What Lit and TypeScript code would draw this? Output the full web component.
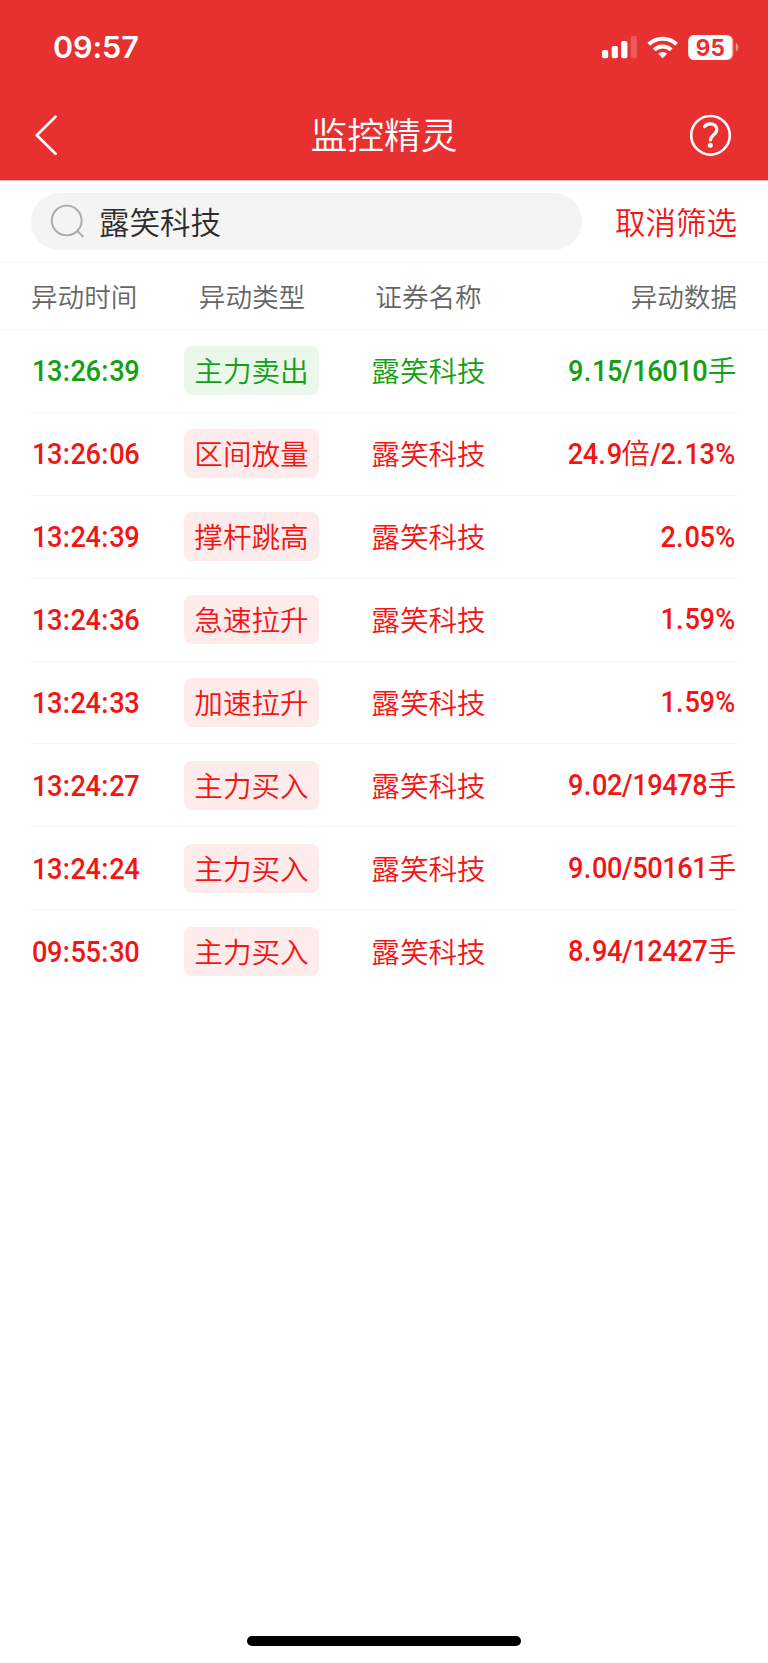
import { LitElement, html, css, svg } from "lit";
import { customElement, property } from "lit/decorators.js";
import { classMap } from "lit/directives/class-map.js";

interface Alert {
  time: string;
  type: string;
  name: string;
  data: string;
  sell?: boolean;
}

const ALERTS: Alert[] = [
  { time: "13:26:39", type: "主力卖出", name: "露笑科技", data: "9.15/16010手", sell: true },
  { time: "13:26:06", type: "区间放量", name: "露笑科技", data: "24.9倍/2.13%" },
  { time: "13:24:39", type: "撑杆跳高", name: "露笑科技", data: "2.05%" },
  { time: "13:24:36", type: "急速拉升", name: "露笑科技", data: "1.59%" },
  { time: "13:24:33", type: "加速拉升", name: "露笑科技", data: "1.59%" },
  { time: "13:24:27", type: "主力买入", name: "露笑科技", data: "9.02/19478手" },
  { time: "13:24:24", type: "主力买入", name: "露笑科技", data: "9.00/50161手" },
  { time: "09:55:30", type: "主力买入", name: "露笑科技", data: "8.94/12427手" },
];

@customElement("status-bar")
class StatusBar extends LitElement {
  static styles = css`
    :host {
      display: flex;
      height: 90px;
      box-sizing: border-box;
      padding: 30px 29px 0 53px;
      justify-content: space-between;
      align-items: flex-start;
      color: #fff;
    }
    .clock {
      font: 600 30.5px/33px Inter, sans-serif;
      letter-spacing: -0.1px;
    }
    .icons {
      display: block;
      margin-top: 3px;
    }
    .level {
      font: 700 22.5px Inter, sans-serif;
      fill: #e83030;
    }
  `;
  render() {
    return html`
      <span class="clock">09:57</span>
      <svg class="icons" width="138" height="30" viewBox="601 33 138 30">
        ${svg`
          <g fill="#fff">
            <rect x="602" y="50" width="6.2" height="8.2" rx="1.8" />
            <rect x="611.7" y="46" width="6.2" height="12.2" rx="1.8" />
            <rect x="621.2" y="41" width="6.2" height="17.2" rx="1.8" />
            <rect x="630.8" y="36" width="6.2" height="22.2" rx="1.8" opacity=".2" />
            <rect x="688.3" y="35" width="45" height="25" rx="6" opacity=".6" />
            <rect x="688.3" y="35" width="43.5" height="25" rx="6" />
            <path d="M735.8 42.8c3.2 1.4 3.2 7.4 0 8.8z" opacity=".5" />
            <path d="M662.7 58.2l-4.5-4.5a6.6 6.6 0 0 1 9 0z" />
          </g>
          <g fill="none" stroke="#fff" stroke-width="4">
            <path d="M648.8 44.3a20 20 0 0 1 27.8 0" />
            <path d="M654.2 49.9a12.4 12.4 0 0 1 17 0" />
          </g>
          <text class="level" x="710.3" y="55.5" text-anchor="middle">95</text>
        `}
      </svg>
    `;
  }
}

@customElement("nav-bar")
class NavBar extends LitElement {
  static styles = css`
    :host {
      display: grid;
      grid-template-columns: 1fr auto 1fr;
      align-items: center;
      height: 90px;
      box-sizing: border-box;
      padding: 0 36px 0 35px;
      color: #fff;
    }
    .title {
      font-size: 36.8px;
      line-height: 44px;
      font-weight: 350;
      padding: 0 0 4px 1px;
    }
    .icon {
      display: block;
      margin-bottom: 1px;
    }
    .help {
      justify-self: end;
    }
  `;
  render() {
    return html`
      <svg class="icon" width="24" height="42" viewBox="35 114 24 42" fill="none" stroke="#fff" stroke-width="2.7" stroke-linecap="round" stroke-linejoin="round">
        <path d="M55.6 116.6L36.8 135.2L55.6 153.8" />
      </svg>
      <span class="title">监控精灵</span>
      <svg class="icon help" width="42" height="42" viewBox="690 114 42 42" fill="none" stroke="#fff">
        <circle cx="710.5" cy="135.3" r="19.3" stroke-width="2.6" />
        <path d="M704.6 126.6c1.2-1.8 3.3-2.7 5.6-2.7 4 0 6.5 2.2 6.5 5.8 0 5-6.2 5.6-6.2 10.2" stroke-width="3.3" stroke-linecap="round" />
        <circle cx="710.3" cy="145.2" r="2.5" fill="#fff" stroke="none" />
      </svg>
    `;
  }
}

@customElement("alert-row")
class AlertRow extends LitElement {
  @property({ attribute: false }) alert!: Alert;

  static styles = css`
    .row {
      display: grid;
      grid-template-columns: 153px 135px 218px 199px;
      align-items: center;
      height: 81.6px;
      font-size: 28.6px;
      line-height: 40px;
      font-weight: 350;
      color: #f51414;
      white-space: nowrap;
    }
    .sell {
      color: #14a014;
    }
    .num {
      font-family: Roboto, "Noto Sans CJK SC", sans-serif;
      font-weight: 500;
      letter-spacing: -0.45px;
      transform: scaleX(0.95);
    }
    .time {
      padding: 1px 0 0 1px;
      transform-origin: left;
    }
    .colon {
      letter-spacing: 0.85px;
      padding-left: 0.7px;
    }
    .wide {
      letter-spacing: 0.9px;
      padding-left: 0.6px;
    }
    .han {
      display: inline-block;
      margin: 0 0.8px;
      font-weight: 350;
      letter-spacing: 0;
      transform: scaleX(1.053);
    }
    .tag {
      height: 49px;
      line-height: 47px;
      text-align: center;
      border-radius: 8px;
      background: #feecec;
    }
    .sell .tag {
      background: #ebf7eb;
    }
    .name {
      padding: 0 0 1px 1px;
      text-align: center;
    }
    .data {
      text-align: right;
      transform-origin: right;
    }
  `;
  render() {
    const a = this.alert;
    return html`
      <div class=${classMap({ row: true, sell: !!a.sell })}>
        <span class="num time">${a.time.split(":").map((p, i) => (i ? html`<span class="colon">:</span>${p}` : p))}</span>
        <span class="tag">${a.type}</span>
        <span class="name">${a.name}</span>
        <span class="num data">${a.data
          .split(/([手倍.%])/)
          .map((p) =>
            /[手倍]/.test(p) ? html`<span class="han">${p}</span>` : /^[.%]$/.test(p) ? html`<span class="wide">${p}</span>` : p
          )}</span>
      </div>
    `;
  }
}

@customElement("app-root")
class AppRoot extends LitElement {
  static styles = css`
    :host {
      display: flex;
      flex-direction: column;
      width: 768px;
      height: 1663px;
      overflow: hidden;
      background: #fff;
      font-family: "Noto Sans CJK SC", sans-serif;
    }
    .top {
      background: #e83030;
      border-bottom: 1px solid #fbb9b9;
    }
    .search {
      display: flex;
      align-items: center;
      justify-content: space-between;
      height: 82px;
      box-sizing: border-box;
      padding: 0 31px 0 31px;
      border-bottom: 1px solid #f3f3f3;
      font-size: 30.5px;
      line-height: 44px;
      font-weight: 350;
    }
    .field {
      display: flex;
      align-items: center;
      gap: 14px;
      width: 551px;
      height: 57px;
      box-sizing: border-box;
      padding-left: 19px;
      border-radius: 29px;
      background: #f4f4f4;
      color: #2c2c2c;
    }
    .field span,
    .cancel {
      padding-bottom: 2px;
    }
    .cancel {
      color: #f51414;
    }
    .head {
      display: grid;
      grid-template-columns: 153px 135px 218px 200px;
      align-items: center;
      height: 67px;
      box-sizing: border-box;
      padding: 0 31px 2px;
      border-bottom: 1px solid #f3f3f3;
      font-size: 26.6px;
      font-weight: 350;
      color: #666;
    }
    .mid {
      padding-left: 1px;
      text-align: center;
    }
    .end {
      text-align: right;
    }
    .list {
      display: flex;
      flex-direction: column;
      flex: 1;
      padding: 0 31px;
    }
    .item {
      display: block;
      height: 82.9px;
      box-sizing: border-box;
      border-bottom: 1px solid #f5f5f5;
    }
    .item:last-child {
      border-bottom: 0;
    }
    .home {
      align-self: center;
      width: 274px;
      height: 10px;
      margin-bottom: 17px;
      border-radius: 5px;
      background: #000;
    }
  `;
  render() {
    return html`
      <div class="top"><status-bar></status-bar><nav-bar></nav-bar></div>
      <div class="search">
        <div class="field">
          <svg width="35" height="35" viewBox="50 204 35 35" fill="none" stroke="#aaa" stroke-width="1.9">
            <circle cx="66.7" cy="220.5" r="14.9" />
            <path d="M77 230.6L83.4 237" />
          </svg>
          <span>露笑科技</span>
        </div>
        <span class="cancel">取消筛选</span>
      </div>
      <div class="head">
        <span>异动时间</span><span class="mid">异动类型</span><span class="mid">证券名称</span><span class="end">异动数据</span>
      </div>
      <div class="list">${ALERTS.map((a) => html`<alert-row class="item" .alert=${a}></alert-row>`)}</div>
      <div class="home"></div>
    `;
  }
}
